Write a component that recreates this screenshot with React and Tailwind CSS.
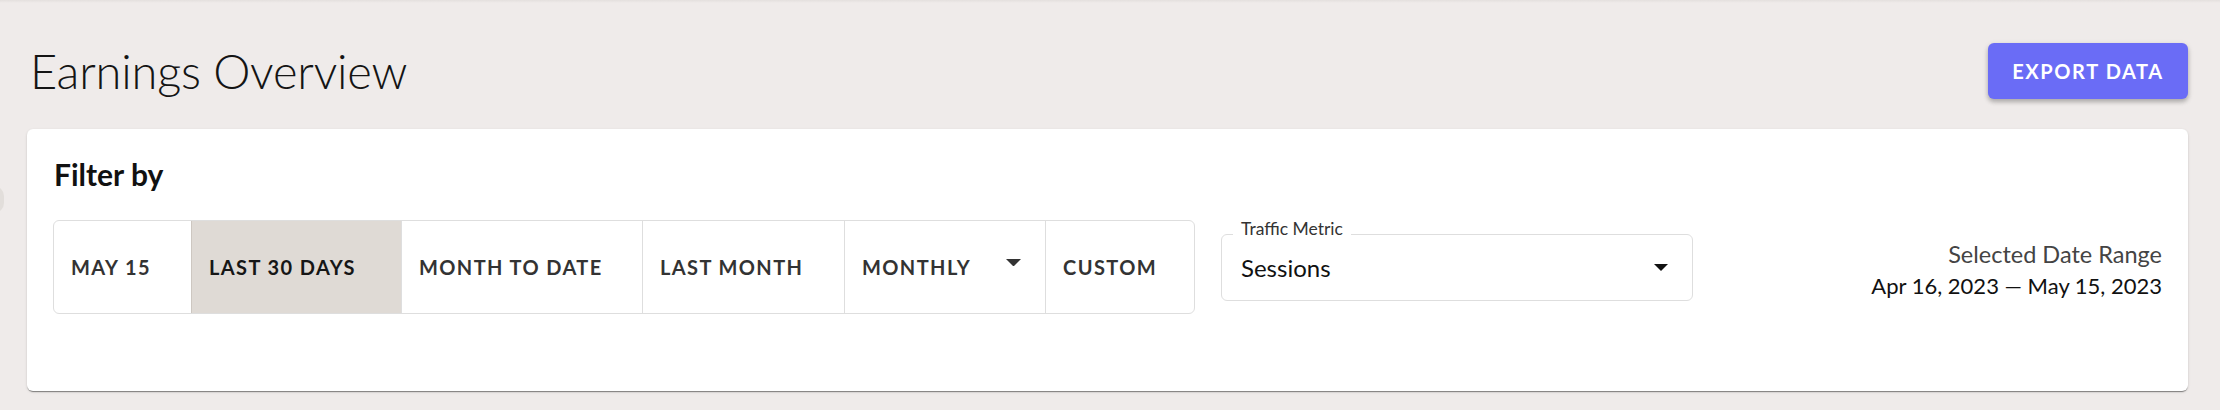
const RANGES = [
  { label: 'MAY 15', w: 'w-[137px]' },
  { label: 'LAST 30 DAYS', w: 'w-[210px]', active: true },
  { label: 'MONTH TO DATE', w: 'w-[241px]' },
  { label: 'LAST MONTH', w: 'w-[202px]' },
  { label: 'MONTHLY', w: 'w-[201px]', menu: true },
  { label: 'CUSTOM', w: 'w-[149px]' },
]

function Caret({ className }) {
  return (
    <svg viewBox="0 0 14 7" className={className} fill="currentColor">
      <path d="M0 0h14L7 7z" />
    </svg>
  )
}

export default function App() {
  return (
    <div className="relative min-h-[410px] bg-[#efebea] font-['Lato','Noto_Sans',sans-serif] overflow-hidden">
      <div className="h-[3px] bg-gradient-to-b from-[#e4e0de] to-[#efebea]" />
      <div className="absolute left-[-16px] top-[186px] w-[20px] h-[27px] rounded-full bg-[#e2dedb]" />

      <div className="pl-[27px] pr-[32px] pt-[40px]">
        <div className="flex items-start justify-between h-[86px]">
          <h1 className="text-[47px] leading-[56px] font-light text-[#141414] pl-[3px] tracking-[-0.2px]">Earnings Overview</h1>
          <button className="w-[200px] h-[56px] rounded-[6px] bg-[#6a6cf6] text-white text-[20px] font-bold tracking-[1.6px] shadow-[0_3px_4px_rgba(0,0,0,0.2),0_2px_6px_rgba(0,0,0,0.12)]">
            EXPORT DATA
          </button>
        </div>

        <div className="h-[262px] rounded-[6px] bg-white px-[26px] pt-[25px] shadow-[0_2px_1px_-1px_rgba(0,0,0,0.32),0_1px_1px_0_rgba(0,0,0,0.14),0_1px_3px_0_rgba(0,0,0,0.12)]">
          <h2 className="text-[30px] leading-[40px] font-bold text-[#111] pl-[1px]">Filter by</h2>

          <div className="mt-[26px] flex items-center">
            <div className="flex shrink-0 h-[94px] rounded-[6px] border border-[#dedede]">
              {RANGES.map((r, i) => (
                <div
                  key={r.label}
                  className={`${r.w} shrink-0 flex items-center pl-[17px] pr-[24px] text-[20px] font-bold tracking-[1.4px] whitespace-nowrap ${i > 0 ? 'border-l' : ''} ${
                    r.active ? 'bg-[#dfdad5] border-[#cdc7c1] text-[#161616]' : 'border-[#dedede] text-[#333]'
                  } ${i === 0 ? 'rounded-l-[6px]' : ''} ${i === RANGES.length - 1 ? 'rounded-r-[6px]' : ''}`}
                >
                  <span className="flex-1">{r.label}</span>
                  {r.menu && <Caret className="w-[15px] h-[7.5px] text-[#333] mb-[9px]" />}
                </div>
              ))}
            </div>

            <div className="relative shrink-0 ml-[26px] w-[472px] h-[67px] rounded-[6px] border border-[#dedede] flex items-center pl-[19px] pr-[24px]">
              <span className="absolute left-[11px] top-[-17px] bg-white px-[8px] text-[17.5px] leading-[22px] text-[#333]">Traffic Metric</span>
              <span className="flex-1 text-[24px] text-[#111] pt-[2px]">Sessions</span>
              <Caret className="w-[14px] h-[7px] text-[#111]" />
            </div>

            <div className="ml-auto pt-[5px] text-right leading-[32px] whitespace-nowrap">
              <div className="text-[23.5px] text-[#444]">Selected Date Range</div>
              <div className="text-[22px] text-[#111]">Apr 16, 2023 — May 15, 2023</div>
            </div>
          </div>
        </div>
      </div>
    </div>
  )
}
